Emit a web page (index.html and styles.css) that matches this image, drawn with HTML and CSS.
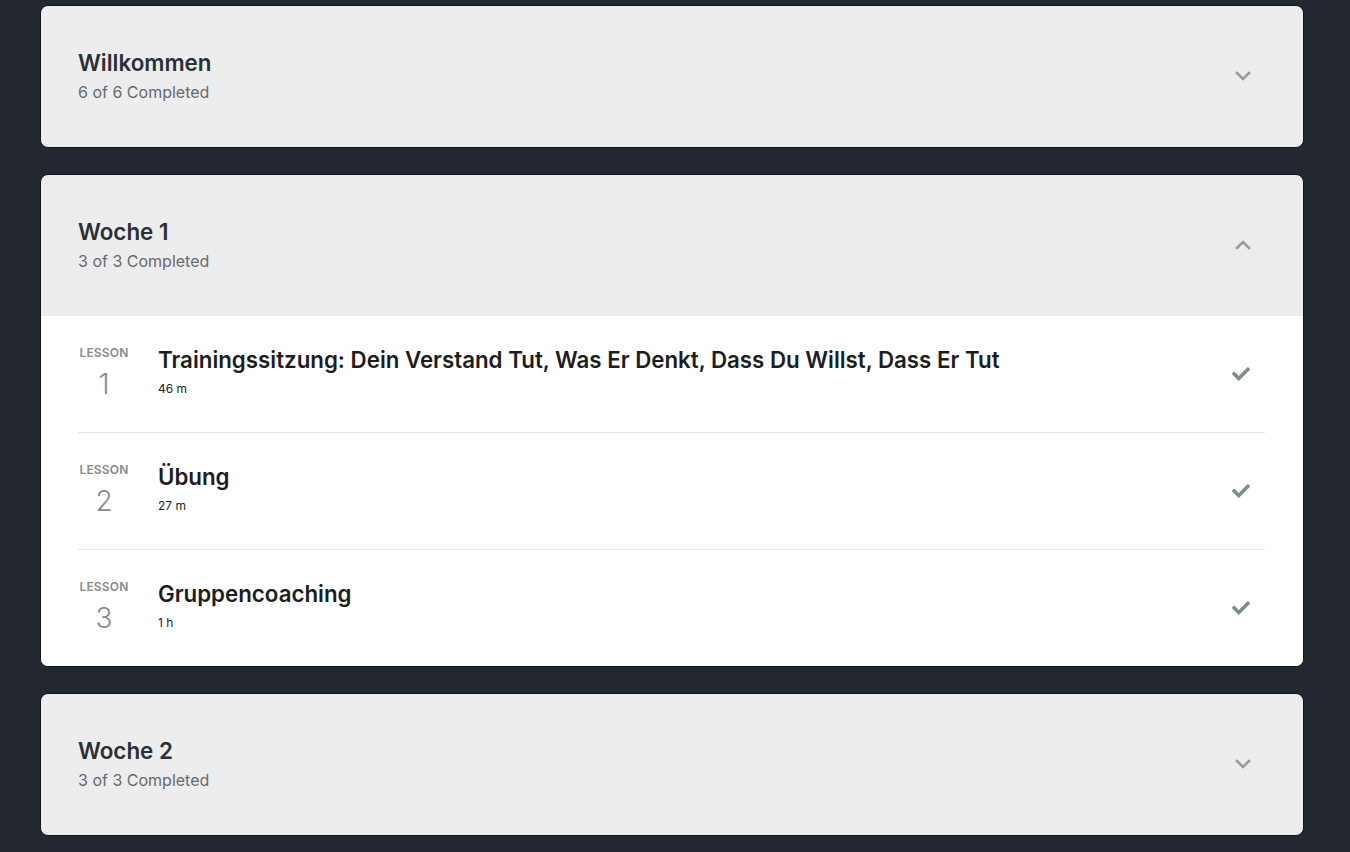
FILE: index.html
```html
<!DOCTYPE html>
<html>
<head>
<meta charset="utf-8">
<title>Kurs</title>
<link rel="stylesheet" href="styles.css">
</head>
<body>
<div class="modules">

  <div class="module">
    <div class="module-head">
      <div>
        <h2 class="module-title">Willkommen</h2>
        <div class="module-progress">6 of 6 Completed</div>
      </div>
      <svg class="chev" viewBox="0 0 16 10" width="16" height="10"><path d="M2 2l6 6 6-6" /></svg>
    </div>
  </div>

  <div class="module open">
    <div class="module-head">
      <div>
        <h2 class="module-title">Woche 1</h2>
        <div class="module-progress">3 of 3 Completed</div>
      </div>
      <svg class="chev" viewBox="0 0 16 10" width="16" height="10"><path d="M2 8l6-6 6 6" /></svg>
    </div>
    <ul class="lessons">
      <li class="lesson">
        <div class="lesson-num"><span class="lesson-label">Lesson</span><span class="lesson-n">1</span></div>
        <div class="lesson-body">
          <div class="lesson-title">Trainingssitzung: Dein Verstand Tut, Was Er Denkt, Dass Du Willst, Dass Er Tut</div>
          <div class="lesson-time">46 m</div>
        </div>
        <svg class="check" viewBox="0 0 512 512" width="18" height="18"><path d="M173.9 439.4l-166.4-166.4c-10-10-10-26.2 0-36.2l36.2-36.2c10-10 26.2-10 36.2 0L192 312.7 432.1 72.6c10-10 26.2-10 36.2 0l36.2 36.2c10 10 10 26.2 0 36.2l-294.4 294.4c-10 10-26.2 10-36.2 0z"/></svg>
      </li>
      <li class="lesson">
        <div class="lesson-num"><span class="lesson-label">Lesson</span><span class="lesson-n">2</span></div>
        <div class="lesson-body">
          <div class="lesson-title">Übung</div>
          <div class="lesson-time">27 m</div>
        </div>
        <svg class="check" viewBox="0 0 512 512" width="18" height="18"><path d="M173.9 439.4l-166.4-166.4c-10-10-10-26.2 0-36.2l36.2-36.2c10-10 26.2-10 36.2 0L192 312.7 432.1 72.6c10-10 26.2-10 36.2 0l36.2 36.2c10 10 10 26.2 0 36.2l-294.4 294.4c-10 10-26.2 10-36.2 0z"/></svg>
      </li>
      <li class="lesson">
        <div class="lesson-num"><span class="lesson-label">Lesson</span><span class="lesson-n">3</span></div>
        <div class="lesson-body">
          <div class="lesson-title">Gruppencoaching</div>
          <div class="lesson-time">1 h</div>
        </div>
        <svg class="check" viewBox="0 0 512 512" width="18" height="18"><path d="M173.9 439.4l-166.4-166.4c-10-10-10-26.2 0-36.2l36.2-36.2c10-10 26.2-10 36.2 0L192 312.7 432.1 72.6c10-10 26.2-10 36.2 0l36.2 36.2c10 10 10 26.2 0 36.2l-294.4 294.4c-10 10-26.2 10-36.2 0z"/></svg>
      </li>
    </ul>
  </div>

  <div class="module">
    <div class="module-head">
      <div>
        <h2 class="module-title">Woche 2</h2>
        <div class="module-progress">3 of 3 Completed</div>
      </div>
      <svg class="chev" viewBox="0 0 16 10" width="16" height="10"><path d="M2 2l6 6 6-6" /></svg>
    </div>
  </div>

</div>
</body>
</html>
```

FILE: styles.css
```css
html, body { margin: 0; padding: 0; background: #23272f; }
body { font-family: Inter, "Noto Sans", sans-serif; }

.modules { width: 1264px; margin: 0 0 0 40px; padding-top: 5px; display: flex; flex-direction: column; gap: 26px; }

.module { background: #ededed; border: 1px solid #111419; border-radius: 8px; overflow: hidden; }

.module-head { display: flex; align-items: center; justify-content: space-between; height: 141px; padding: 0 52px 2px 37px; box-sizing: border-box; }
.module-title { margin: 0; font-size: 22.4px; line-height: 28px; font-weight: 600; color: #2b2f37; }
.module-progress { margin-top: 4px; font-size: 16px; line-height: 22px; color: #666a70; }

.chev { fill: none; stroke: #9a9a9a; stroke-width: 2.6; stroke-linecap: square; }

.lessons { list-style: none; margin: 0; padding: 0 38px 0 37px; background: #fff; }
.lesson { display: flex; align-items: center; height: 117px; border-bottom: 1px solid #e6e6e6; box-sizing: border-box; }
.lesson:last-child { border-bottom: 0; height: 116px; }

.lesson-num { width: 52px; margin-right: 28px; display: flex; flex-direction: column; align-items: center; align-self: flex-start; padding-top: 30px; }
.lesson-label { font-size: 12px; line-height: 14px; font-weight: 600; letter-spacing: 0.2px; text-transform: uppercase; color: #8a8a8a; }
.lesson-n { margin-top: 5px; font-size: 28px; line-height: 38px; font-weight: 300; color: #8a8a8a; }

.lesson-body { flex: 1; align-self: flex-start; padding-top: 30px; }
.lesson-title { font-size: 22.3px; line-height: 28px; font-weight: 600; color: #1c1d20; }
.lesson-time { margin-top: 6px; font-size: 12px; line-height: 18px; color: #222; }

.check { fill: #7c8e86; margin-right: 15px; }
```
